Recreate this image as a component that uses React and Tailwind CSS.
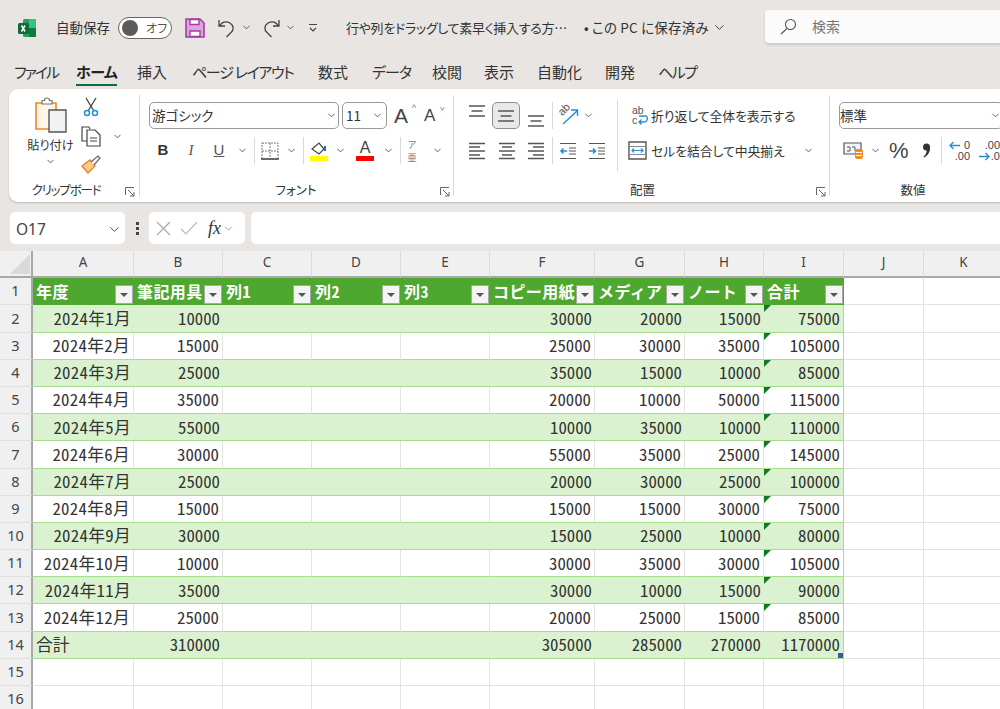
import { ChevronDown } from 'lucide-react';

const jp = "font-['Noto_Sans_CJK_JP','Noto_Sans',sans-serif] [font-feature-settings:'palt']";
const cols = ['A', 'B', 'C', 'D', 'E', 'F', 'G', 'H', 'I', 'J', 'K'];
const heads = ['年度', '筆記用具', '列1', '列2', '列3', 'コピー用紙', 'メディア', 'ノート', '合計'];
const rows = [
    ['2024年1月', 10000, 30000, 20000, 15000, 75000],
    ['2024年2月', 15000, 25000, 30000, 35000, 105000],
    ['2024年3月', 25000, 35000, 15000, 10000, 85000],
    ['2024年4月', 35000, 20000, 10000, 50000, 115000],
    ['2024年5月', 55000, 10000, 35000, 10000, 110000],
    ['2024年6月', 30000, 55000, 35000, 25000, 145000],
    ['2024年7月', 25000, 20000, 30000, 25000, 100000],
    ['2024年8月', 15000, 15000, 15000, 30000, 75000],
    ['2024年9月', 30000, 15000, 25000, 10000, 80000],
    ['2024年10月', 10000, 30000, 35000, 30000, 105000],
    ['2024年11月', 35000, 30000, 10000, 15000, 90000],
    ['2024年12月', 25000, 20000, 25000, 15000, 85000],
];
const tabs = [
    { t: 'ファイル', cls: 'w-[62px] tracking-[-2px]' },
    { t: 'ホーム', cls: 'w-[61px] font-bold text-[#222] tracking-[-0.5px]', on: true },
    { t: '挿入', cls: 'w-[55px]' },
    { t: 'ページ レイアウト', cls: 'w-[126px] tracking-[-1.3px]' },
    { t: '数式', cls: 'w-[54px]' },
    { t: 'データ', cls: 'w-[60px] tracking-[-1px]' },
    { t: '校閲', cls: 'w-[52px]' },
    { t: '表示', cls: 'w-[53px]' },
    { t: '自動化', cls: 'w-[68px]' },
    { t: '開発', cls: 'w-[53px]' },
    { t: 'ヘルプ', cls: 'w-[60px] tracking-[-1.5px]' },
];

function Chev({ className = 'w-[14px]' }) {
    return (
        <span className={`flex justify-center shrink-0 ${className}`}>
            <ChevronDown size={11} strokeWidth={1.8} color="#444" />
        </span>
    );
}

function Sep({ className = 'h-[27px]' }) {
    return <span className={`w-px bg-[#d9d9d9] shrink-0 ${className}`} />;
}

function Launcher({ className = '' }) {
    return (
        <svg width="10" height="10" viewBox="0 0 10 10" className={className} fill="none" stroke="#666" strokeWidth="1">
            <path d="M.5 8V.5H9M3 3l6 6M9 5v4H5" />
        </svg>
    );
}

function Lines({ w = [17, 11, 17], y = 0 }) {
    return (
        <svg width="18" height="18" viewBox="0 0 18 18" stroke="#555" strokeWidth="1.3">
            {w.map((len, i) => (
                <path key={i} d={`M${(18 - len) / 2} ${y + 4 + i * 5}h${len}`} />
            ))}
        </svg>
    );
}

function AlignLines({ side }) {
    const short = side === 'left' ? 'M1 5h11M1 13h11' : side === 'right' ? 'M6 5h11M6 13h11' : 'M4 5h10M4 13h10';
    return (
        <svg width="18" height="18" viewBox="0 0 18 18" stroke="#555" strokeWidth="1.3">
            <path d="M1 1.500h16M1 9h16M1 16.500h16" />
            <path d={short} />
        </svg>
    );
}

function Indent({ flip }) {
    return (
        <svg width="18" height="18" viewBox="0 0 18 18" fill="none">
            <path d="M1 1.500h16M1 16.500h16M10 6h7M10 9h7M10 12h7" stroke="#555" strokeWidth="1.2" />
            <path d={flip ? 'M1 9h6M5 6.500 7.500 9 5 11.500' : 'M8 9H2M4.500 6.500 2 9l2.500 2.500'} stroke="#1f8fd6" strokeWidth="1.5" />
        </svg>
    );
}

function FilterBtn() {
    return (
        <span className="w-[18px] h-[19px] shrink-0 bg-[#f4f4f4] border border-[#a8a8a8] flex items-center justify-center">
            <span className="w-0 h-0 border-x-[4px] border-x-transparent border-t-[4px] border-t-[#555] mt-px" />
        </span>
    );
}

function SheetCell({ children, band, left, edge, date }) {
    return (
        <div
            className={`relative flex items-center border-b border-b-[#a6de8e] text-[#333] text-[16.8px] [font-feature-settings:'hwid'] font-['Noto_Sans_CJK_JP',sans-serif] whitespace-nowrap ${
                left ? 'justify-start pl-[3px]' : 'justify-end pr-[3px]'
            } ${date ? 'tracking-[0.3px]' : ''} ${band ? 'bg-[#daf2d0]' : 'bg-white'} ${
                edge ? 'border-r border-r-[#a6de8e]' : band ? '' : 'border-r border-r-[#e3e3e3]'
            }`}
        >
            {children}
        </div>
    );
}

function RowHead({ n }) {
    return (
        <div className="flex items-center justify-center bg-[#f0f0f0] border-r-2 border-r-[#a8a8a8] border-b border-b-[#e0e0e0] text-[14.5px] text-[#444] font-['Noto_Sans',sans-serif]">
            {n}
        </div>
    );
}

function Empty() {
    return <div className="bg-white border-r border-b border-[#e3e3e3]" />;
}

function Corner() {
    return <span className="w-0 h-0 absolute left-0 top-0 border-t-[7px] border-t-[#0f7b1f] border-r-[7px] border-r-transparent" />;
}

export default function App() {
    return (
        <div className={`w-[1000px] h-[709px] overflow-hidden bg-[#e9e5e2] text-[#333] flex flex-col ${jp}`}>
            <div className="h-[55px] flex items-center shrink-0 relative">
                <svg width="20" height="20" viewBox="0 0 20 20" className="ml-[17px]">
                    <rect x="6" y="1" width="13" height="18" rx="1.500" fill="#21a366" />
                    <rect x="12" y="1" width="7" height="9" fill="#33c481" />
                    <rect x="12" y="10" width="7" height="9" fill="#107c41" />
                    <rect x="1" y="5" width="11" height="11" rx="1.500" fill="#0e6b3a" />
                    <path d="m4 7.500 3.500 6M7.500 7.500l-3.500 6" stroke="#fff" strokeWidth="1.500" transform="translate(.5)" />
                </svg>
                <span className="ml-[19px] text-[13.5px]">自動保存</span>
                <span className="ml-[8px] w-[54px] h-[22px] rounded-full border border-[#666] bg-white flex items-center">
                    <span className="ml-[3px] w-[16px] h-[16px] rounded-full bg-[#5c5c5c]" />
                    <span className="ml-[8px] text-[12px] text-[#555]">オフ</span>
                </span>
                <svg width="20" height="20" viewBox="0 0 20 20" className="ml-[13px]">
                    <path d="M1 1h14l4 4v14H1z" fill="#dca6dc" stroke="#a53ca5" strokeWidth="1.600" />
                    <path d="M5 1.500h9v5H5zM5 13h10v5.500H5z" fill="#fff" stroke="#a53ca5" strokeWidth="1.400" />
                </svg>
                <svg width="20" height="20" viewBox="0 0 20 20" fill="none" stroke="#444" strokeWidth="1.300" className="ml-[12px]">
                    <path d="M2 2v6h6M2.500 8C5 4 9 3 13 5c4 2.500 4 7 1 9.500L9.500 19" />
                </svg>
                <Chev className="w-[16px] ml-[1px]" />
                <svg width="20" height="20" viewBox="0 0 20 20" fill="none" stroke="#444" strokeWidth="1.300" className="ml-[7px]">
                    <path d="M18 2v6h-6M17.500 8C15 4 11 3 7 5 3 7.500 3 12 6 14.500l4.500 4.500" />
                </svg>
                <Chev className="w-[16px] ml-[1px]" />
                <svg width="10" height="10" viewBox="0 0 10 10" fill="none" stroke="#444" strokeWidth="1.200" className="ml-[10px]">
                    <path d="M1 1.500h8M2 5l3 3 3-3" />
                </svg>
                <span className="ml-[28px] text-[13px] tracking-[-0.3px] whitespace-nowrap w-[218px]">行や列をドラッグして素早く挿入する方…</span>
                <span className="ml-[20px] text-[13.5px] tracking-[0.2px] whitespace-nowrap">• この PC に保存済み</span>
                <ChevronDown size={15} strokeWidth={1.5} color="#333" className="ml-[3px]" />
                <div className="absolute left-[765px] top-[10px] w-[260px] h-[34px] bg-[#fbfbfb] rounded border-b border-b-[#cfcfcf] shadow-sm flex items-center">
                    <svg width="17" height="17" viewBox="0 0 17 17" fill="none" stroke="#555" strokeWidth="1.100" className="ml-[15px]">
                        <circle cx="10.500" cy="6.500" r="5" />
                        <path d="M7 10.500 1 16" />
                    </svg>
                    <span className="ml-[15px] text-[14px] text-[#777]">検索</span>
                </div>
            </div>

            <div className="h-[34px] flex items-center pl-[14px] text-[15px] shrink-0 whitespace-nowrap">
                {tabs.map((tab) => (
                    <span key={tab.t} className={`shrink-0 ${tab.cls}`}>
                        <span className="relative inline-block">
                            {tab.t}
                            {tab.on && <span className="absolute left-0 right-0 bottom-[-3px] h-[2px] bg-[#0e6b3a]" />}
                        </span>
                    </span>
                ))}
            </div>

            <div className="ml-[9px] h-[113px] shrink-0 bg-white rounded-l-[9px] shadow-[0_1px_2px_#bdb9b6] flex overflow-hidden text-[12.5px]">
                <div className="w-[130px] shrink-0 flex flex-col">
                    <div className="h-[86px] flex pt-[8px]">
                        <div className="w-[63px] ml-[10px] shrink-0 flex flex-col items-center">
                            <svg width="34" height="36" viewBox="0 0 34 36" fill="none">
                                <path d="M2 6h20v26H2z" fill="#fff5e6" stroke="#ed8b1f" strokeWidth="1.600" />
                                <path d="M8 7V3.500h2.500a2.500 2.500 0 0 1 5 0H18V7z" fill="#fff" stroke="#777" strokeWidth="1.200" />
                                <path d="M15 13h17v22H15z" fill="#f2f2f2" stroke="#555" strokeWidth="1.400" />
                            </svg>
                            <span className="mt-[3px] text-[12.2px] whitespace-nowrap">貼り付け</span>
                            <Chev className="w-[14px] mt-[2px]" />
                        </div>
                        <div className="ml-[-1px] flex flex-col items-start">
                            <svg width="18" height="20" viewBox="0 0 18 20" fill="none" className="ml-[1px]">
                                <path d="M4 1l8 13M14 1 6 14" stroke="#444" strokeWidth="1.300" />
                                <circle cx="5" cy="16" r="2.500" stroke="#1f8fd6" strokeWidth="1.500" />
                                <circle cx="13" cy="16" r="2.500" stroke="#1f8fd6" strokeWidth="1.500" />
                            </svg>
                            <div className="flex items-center mt-[9px]">
                                <svg width="20" height="21" viewBox="0 0 20 21" fill="none" stroke="#444" strokeWidth="1.200">
                                    <path d="M6 15H1V1h7l1 2" />
                                    <path d="M6 4h8l5 5v11H6z" fill="#fff" />
                                    <path d="M9 12h7M9 15h7" />
                                </svg>
                                <Chev className="w-[14px] ml-[9px]" />
                            </div>
                            <svg width="20" height="19" viewBox="0 0 20 19" fill="none" className="mt-[8px]">
                                <path d="M1 11 9 5l5 6-7 7z" fill="#f9c98f" stroke="#e8811a" strokeWidth="1.300" />
                                <path d="m10 7 7-6 2 2-6 7" fill="#fff" stroke="#666" strokeWidth="1.200" />
                            </svg>
                        </div>
                    </div>
                    <div className="relative flex-1 flex items-start justify-center pt-[6px] pr-[16px] text-[12.5px] tracking-[-1.2px] whitespace-nowrap">
                        クリップボード
                        <Launcher className="absolute right-[4px] top-[12px]" />
                    </div>
                </div>
                <Sep className="h-[101px] mt-[6px]" />

                <div className="w-[313px] shrink-0 flex flex-col">
                    <div className="h-[86px] pt-[13px] pl-[9px] flex flex-col gap-[8px]">
                        <div className="h-[27px] flex items-center">
                            <span className="w-[190px] h-[27px] border border-[#9a9a9a] rounded-[5px] flex items-center pl-[2px] text-[13.5px] justify-between">
                                游ゴシック
                                <Chev />
                            </span>
                            <span className="ml-[3px] w-[45px] h-[27px] border border-[#9a9a9a] rounded-[5px] flex items-center pl-[3px] text-[13.5px] justify-between">
                                11
                                <Chev className="w-[14px] mr-[2px]" />
                            </span>
                            <span className="ml-[7px] w-[20px] relative text-[21px] leading-none text-[#444] font-['Liberation_Sans',sans-serif]">
                                A
                                <span className="absolute right-[-2px] top-[-1px] text-[#1f8fd6] text-[9px]">^</span>
                            </span>
                            <span className="ml-[10px] w-[20px] relative text-[17px] leading-none text-[#444] font-['Liberation_Sans',sans-serif]">
                                A
                                <span className="absolute right-[0px] top-[-5px] text-[#1f8fd6] text-[9px] rotate-180">^</span>
                            </span>
                        </div>
                        <div className="h-[27px] flex items-center">
                            <span className="w-[28px] text-center font-bold text-[15px] font-['Liberation_Sans',sans-serif]">B</span>
                            <span className="w-[28px] text-center italic text-[15px] font-['Liberation_Serif',serif] text-[#555]">I</span>
                            <span className="w-[28px] text-center underline text-[15px] font-['Liberation_Sans',sans-serif] text-[#555]">U</span>
                            <Chev className="w-[18px]" />
                            <Sep className="h-[27px] ml-[3px]" />
                            <span className="w-[29px] flex justify-center">
                                <svg width="18" height="18" viewBox="0 0 18 18" fill="none">
                                    <path d="M1 1h16v16H1zM9 1v16M1 9h16" stroke="#777" strokeWidth="1" strokeDasharray="2 1" />
                                    <path d="M0 17h18" stroke="#444" strokeWidth="1.600" />
                                </svg>
                            </span>
                            <Chev className="w-[14px]" />
                            <Sep className="h-[27px] ml-[5px]" />
                            <span className="w-[30px] flex flex-col items-center">
                                <svg width="18" height="15" viewBox="0 0 18 15" fill="none">
                                    <path d="M2 8 9 2l5 6-5 5z" fill="#fff" stroke="#444" strokeWidth="1.200" />
                                    <path d="M15 5v5" stroke="#1f6fb5" strokeWidth="2" />
                                </svg>
                                <span className="w-[18px] h-[5px] bg-[#ffff00]" />
                            </span>
                            <Chev className="w-[12px]" />
                            <span className="ml-[2px] w-[34px] flex flex-col items-center">
                                <span className="text-[16px] leading-[16px] text-[#444] font-['Liberation_Sans',sans-serif]">A</span>
                                <span className="w-[18px] h-[5px] bg-[#ff0000]" />
                            </span>
                            <Chev className="w-[12px]" />
                            <Sep className="h-[27px] ml-[6px]" />
                            <span className="w-[22px] text-[9px] leading-[13px] text-center text-[#777]">
                                <span className="block">ア</span>
                                <span className="block">亜</span>
                            </span>
                            <Chev className="w-[14px] ml-[7px]" />
                        </div>
                    </div>
                    <div className="relative flex-1 flex items-start justify-center pt-[6px] text-[12.5px] pr-[1px]">
                        フォント
                        <Launcher className="absolute right-[3px] top-[12px]" />
                    </div>
                </div>
                <Sep className="h-[101px] mt-[6px]" />

                <div className="w-[375px] shrink-0 flex flex-col">
                    <div className="h-[86px] pt-[13px] pl-[14px] flex">
                        <div className="flex flex-col gap-[8px]">
                            <div className="h-[27px] flex items-center">
                                <span className="w-[18px] -mt-[5px]"><Lines w={[16, 11, 16]} y={-2} /></span>
                                <span className="ml-[6px] w-[28px] h-[27px] bg-[#e8e8e8] border border-[#8f8f8f] rounded-[5px] flex items-center justify-center"><Lines w={[16, 11, 16]} /></span>
                                <span className="ml-[7px] w-[18px] mt-[6px]"><Lines w={[16, 11, 16]} y={2} /></span>
                                <Sep className="h-[27px] ml-[7px]" />
                                <span className="relative ml-[5px] w-[22px] h-[20px]">
                                    <span className="absolute left-[0px] top-[-2px] text-[11px] leading-none text-[#555] -rotate-45 font-['Liberation_Sans',sans-serif]">ab</span>
                                    <svg width="22" height="20" viewBox="0 0 22 20" fill="none" className="absolute left-0 top-0">
                                        <path d="M5 18 19 5M13 4h6.500v6" stroke="#1f8fd6" strokeWidth="1.400" />
                                    </svg>
                                </span>
                                <Chev className="w-[14px] ml-[1px]" />
                            </div>
                            <div className="h-[27px] flex items-center">
                                <AlignLines side="left" />
                                <span className="ml-[12px]"><AlignLines side="center" /></span>
                                <span className="ml-[11px]"><AlignLines side="right" /></span>
                                <Sep className="h-[27px] ml-[7px]" />
                                <span className="ml-[6px]"><Indent /></span>
                                <span className="ml-[11px]"><Indent flip /></span>
                            </div>
                        </div>
                        <Sep className="h-[71px] ml-[11px] -mt-[2px]" />
                        <div className="flex flex-col gap-[8px] whitespace-nowrap text-[12.8px]">
                            <div className="h-[27px] flex items-center pl-[13px]">
                                <span className="relative w-[19px] h-[20px] shrink-0">
                                    <span className="absolute left-[1px] top-[-1px] text-[10.500px] leading-[10px] text-[#555] font-['Liberation_Sans',sans-serif]">
                                        ab<br />c
                                    </span>
                                    <svg width="19" height="20" viewBox="0 0 19 20" fill="none" className="absolute left-0 top-0">
                                        <path d="M8 10h7c3 2 1 6-2 6H8M10.500 13.500 8 16l2.500 2.500" stroke="#1f8fd6" strokeWidth="1.300" />
                                    </svg>
                                </span>
                                <span className="ml-[1px]">折り返して全体を表示する</span>
                            </div>
                            <div className="h-[27px] flex items-center pl-[10px]">
                                <svg width="19" height="19" viewBox="0 0 19 19" fill="none">
                                    <path d="M1 1h17v17H1z" stroke="#555" strokeWidth="1.400" />
                                    <path d="M1 5.500h17M1 13.500h17" stroke="#888" />
                                    <path d="M4 9.500h11M6 7.500l-2 2 2 2M13 7.500l2 2-2 2" stroke="#1f8fd6" strokeWidth="1.200" />
                                </svg>
                                <span className="ml-[4px]">セルを結合して中央揃え</span>
                                <Chev className="w-[14px] ml-[17px]" />
                            </div>
                        </div>
                    </div>
                    <div className="relative flex-1 flex items-start justify-center pt-[6px] text-[12.5px] pl-[2px]">
                        配置
                        <Launcher className="absolute right-[3px] top-[12px]" />
                    </div>
                </div>
                <Sep className="h-[101px] mt-[6px]" />

                <div className="flex-1 min-w-0 flex flex-col">
                    <div className="h-[86px] pt-[13px] pl-[9px] flex flex-col gap-[8px]">
                        <span className="w-[164px] h-[27px] shrink-0 border border-[#9a9a9a] rounded-[5px] flex items-center pl-[0px] text-[13.5px] justify-between">
                            標準
                            <Chev className="w-[14px]" />
                        </span>
                        <div className="h-[27px] flex items-center">
                            <svg width="22" height="19" viewBox="0 0 22 19" fill="none" className="ml-[4px]">
                                <path d="M1 2h17v11H1z" fill="#f5f5f5" stroke="#555" strokeWidth="1.200" />
                                <path d="M4 6h3v4H4M9 6h3v4" stroke="#555" />
                                <rect x="12" y="8" width="8" height="10" rx="2.500" fill="#f08a24" />
                                <path d="M13 11.500h6M13 14.500h6" stroke="#fff" />
                            </svg>
                            <Chev className="w-[14px] ml-[3px]" />
                            <span className="ml-[7px] w-[28px] text-[22px] leading-none text-[#444] font-['Liberation_Sans',sans-serif]">%</span>
                            <span className="w-[18px] flex justify-center">
                                <svg width="9" height="15" viewBox="0 0 9 15" fill="#333">
                                    <circle cx="4.500" cy="4" r="3.500" />
                                    <path d="M8 4c.5 4.500-2 8.500-6 10.500l-.5-1C4 11.500 5 9 4.500 6z" />
                                </svg>
                            </span>
                            <Sep className="h-[27px] ml-[6px]" />
                            <span className="ml-[7px] relative w-[21px] h-[22px] text-[11px] leading-[11px] text-[#444] font-['Liberation_Sans',sans-serif] text-right">
                                <span className="block">0</span>
                                <span className="block">.00</span>
                                <svg width="11" height="9" viewBox="0 0 11 9" fill="none" stroke="#1f8fd6" strokeWidth="1.300" className="absolute left-0 top-[1px]">
                                    <path d="M11 4.500H1M4.500 1 1 4.500 4.500 8" />
                                </svg>
                            </span>
                            <span className="ml-[9px] relative w-[21px] h-[22px] text-[11px] leading-[11px] text-[#444] font-['Liberation_Sans',sans-serif] text-right">
                                <span className="block">.00</span>
                                <span className="block">.0</span>
                                <svg width="11" height="9" viewBox="0 0 11 9" fill="none" stroke="#1f8fd6" strokeWidth="1.300" className="absolute left-0 top-[12px]">
                                    <path d="M0 4.500h10M6.500 1 10 4.500 6.500 8" />
                                </svg>
                            </span>
                        </div>
                    </div>
                    <div className="relative flex-1 flex items-start justify-center pt-[6px] text-[12.5px] pr-[4px]">
                        数値
                    </div>
                </div>
            </div>

            <div className="h-[32px] mt-[10px] ml-[10px] flex shrink-0 items-stretch">
                <div className="w-[115px] bg-white rounded-[5px] flex items-center justify-between pl-[6px] pr-[3px] pt-[3px] text-[15.5px] font-['Noto_Sans',sans-serif] text-[#444]">
                    O17
                    <ChevronDown size={15} strokeWidth={1.6} color="#444" />
                </div>
                <div className="w-[24px] flex flex-col items-center justify-center gap-[2px]">
                    <span className="w-[3px] h-[3px] bg-[#444]" />
                    <span className="w-[3px] h-[3px] bg-[#444]" />
                    <span className="w-[3px] h-[3px] bg-[#444]" />
                </div>
                <div className="w-[96px] bg-white rounded-[5px] flex items-center pl-[7px]">
                    <svg width="15" height="15" viewBox="0 0 15 15" stroke="#aaa" strokeWidth="1.200"><path d="m1 1 13 13M14 1 1 14" /></svg>
                    <svg width="18" height="15" viewBox="0 0 18 15" stroke="#bbb" strokeWidth="1.200" fill="none" className="ml-[9px]"><path d="m1 8 5 5L17 1" /></svg>
                    <span className="ml-[10px] italic text-[18px] leading-none text-[#333] font-['Liberation_Serif',serif]">fx</span>
                    <ChevronDown size={13} strokeWidth={1.3} color="#888" className="ml-[1px]" />
                </div>
                <div className="ml-[6px] flex-1 bg-white rounded-l-[5px]" />
            </div>

            <div className="mt-[7px] flex-1 grid grid-cols-[33px_101px_89px_89px_89px_89px_105px_90px_79px_80px_80px_80px] auto-rows-[27.2px] overflow-hidden font-['Noto_Sans',sans-serif]">
                <div className="relative bg-[#f0f0f0] border-b-2 border-b-[#a8a8a8] border-r-2 border-r-[#a8a8a8]">
                    <span className="absolute left-[10px] top-[3px] w-0 h-0 border-b-[20px] border-b-[#d9d9d9] border-l-[20px] border-l-transparent" />
                </div>
                {cols.map((c) => (
                    <div key={c} className="flex items-center justify-center pb-[3px] bg-[#f0f0f0] border-b-2 border-b-[#a8a8a8] border-r border-r-[#dcdcdc] text-[13.5px] text-[#444]">
                        {c}
                    </div>
                ))}

                <RowHead n={1} />
                {heads.map((h) => (
                    <div key={h} className="flex items-end justify-between bg-[#4ea72e] pl-[3px] pr-px pb-px font-['Noto_Sans_CJK_JP',sans-serif] [font-feature-settings:'hwid'] font-bold text-white text-[16px] tracking-[0.4px] whitespace-nowrap">
                        <span className="self-center">{h}</span>
                        <FilterBtn />
                    </div>
                ))}
                <Empty /><Empty />

                {rows.map((r, i) => {
                    const band = i % 2 === 0;
                    return [
                        <RowHead key={`h${i}`} n={i + 2} />,
                        <SheetCell key={`a${i}`} band={band} date>{r[0]}</SheetCell>,
                        <SheetCell key={`b${i}`} band={band}>{r[1]}</SheetCell>,
                        <SheetCell key={`c${i}`} band={band} />,
                        <SheetCell key={`d${i}`} band={band} />,
                        <SheetCell key={`e${i}`} band={band} />,
                        <SheetCell key={`f${i}`} band={band}>{r[2]}</SheetCell>,
                        <SheetCell key={`g${i}`} band={band}>{r[3]}</SheetCell>,
                        <SheetCell key={`h2${i}`} band={band}>{r[4]}</SheetCell>,
                        <SheetCell key={`i${i}`} band={band} edge><Corner />{r[5]}</SheetCell>,
                        <Empty key={`j${i}`} />,
                        <Empty key={`k${i}`} />,
                    ];
                })}

                <RowHead n={14} />
                <SheetCell band left>合計</SheetCell>
                <SheetCell band>310000</SheetCell>
                <SheetCell band /><SheetCell band /><SheetCell band />
                <SheetCell band>305000</SheetCell>
                <SheetCell band>285000</SheetCell>
                <SheetCell band>270000</SheetCell>
                <SheetCell band edge>
                    1170000
                    <span className="absolute right-0 bottom-0 w-[5px] h-[5px] bg-[#3f51b5]" />
                </SheetCell>
                <Empty /><Empty />

                {[15, 16].map((n) => [
                    <RowHead key={n} n={n} />,
                    ...Array.from({ length: 11 }, (_, k) => <Empty key={`${n}-${k}`} />),
                ])}
            </div>
        </div>
    );
}
